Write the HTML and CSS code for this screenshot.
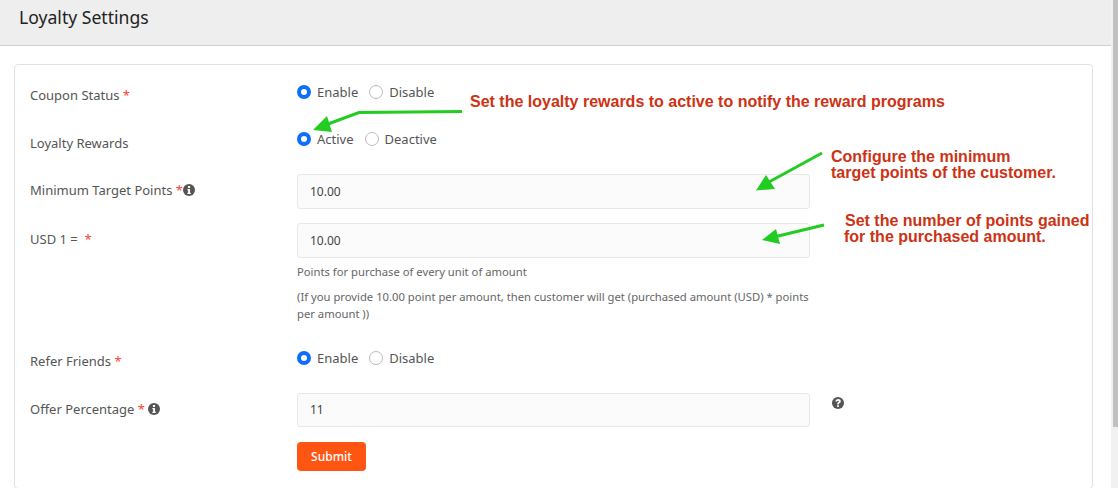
FILE: index.html
```html
<!DOCTYPE html>
<html lang="en">

<head>
  <meta charset="UTF-8">
  <meta name="viewport" content="width=device-width, initial-scale=1.0">
  <title>Loyalty Settings</title>
  <link rel="stylesheet" href="styles.css">
</head>

<body>
  <div class="page">
    <header class="page-header">
      <h1>Loyalty Settings</h1>
    </header>

    <form class="card">
      <div class="form-row">
        <label class="field-label">Coupon Status <span class="req">*</span></label>
        <div class="radio-group">
          <label class="radio"><input type="radio" name="coupon" checked> Enable</label>
          <label class="radio"><input type="radio" name="coupon"> Disable</label>
        </div>
      </div>

      <div class="form-row">
        <label class="field-label">Loyalty Rewards</label>
        <div class="radio-group">
          <label class="radio"><input type="radio" name="rewards" checked> Active</label>
          <label class="radio"><input type="radio" name="rewards"> Deactive</label>
        </div>
      </div>

      <div class="form-row">
        <label class="field-label">Minimum Target Points <span class="req">*</span><svg class="icon" viewBox="0 0 16 16"><circle cx="8" cy="8" r="8" /><path class="glyph" d="M6.6 2.8h2.8v2.4H6.6zM5.8 6.6h3.6v5h1v1.7H5.8v-1.7h1V8.3h-1z" /></svg></label>
        <div class="field">
          <input class="text-input" type="text" value="10.00">
        </div>
      </div>

      <div class="form-row">
        <label class="field-label">USD 1 = &nbsp;<span class="req">*</span></label>
        <div class="field">
          <input class="text-input" type="text" value="10.00">
          <p class="hint hint-first">Points for purchase of every unit of amount</p>
          <p class="hint">(If you provide 10.00 point per amount, then customer will get (purchased amount (USD) * points per amount ))</p>
        </div>
      </div>

      <div class="form-row">
        <label class="field-label">Refer Friends <span class="req">*</span></label>
        <div class="radio-group">
          <label class="radio"><input type="radio" name="refer" checked> Enable</label>
          <label class="radio"><input type="radio" name="refer"> Disable</label>
        </div>
      </div>

      <div class="form-row">
        <label class="field-label">Offer Percentage <span class="req">*</span> <svg class="icon" viewBox="0 0 16 16"><circle cx="8" cy="8" r="8" /><path class="glyph" d="M6.6 2.8h2.8v2.4H6.6zM5.8 6.6h3.6v5h1v1.7H5.8v-1.7h1V8.3h-1z" /></svg></label>
        <div class="field">
          <input class="text-input" type="text" value="11">
          <button class="submit-btn" type="button">Submit</button>
        </div>
        <svg class="icon help" viewBox="0 0 16 16"><circle cx="8" cy="8" r="6.9" /><path class="glyph" d="M5 6.2C5.2 4.4 6.5 3.4 8.2 3.4c1.700 0 3 1 3 2.600 0 1.300-.8 1.900-1.600 2.400-.5.300-.7.500-.7 1v.3H7V9.300c0-1.100.5-1.700 1.300-2.200.5-.3.900-.5.900-1 0-.4-.4-.8-1-.8-.7 0-1.100.4-1.200 1.100zM7 10.500h2v2H7z" /></svg>
      </div>
    </form>
  </div>

  <div class="scrollbar"><div class="scrollbar-thumb"></div></div>

  <!-- annotations drawn on top of the screenshot -->
  <svg class="arrows" viewBox="0 0 1118 488">
    <path class="arrow-line" d="M462 111.500L359 112.500L328 124" />
    <polygon class="arrow-head" points="313,130 327,116 332,132" />
    <path class="arrow-line" d="M822 153L769 182" />
    <polygon class="arrow-head" points="756,190.500 766,175 775,189" />
    <path class="arrow-line" d="M824 225L776 236.500" />
    <polygon class="arrow-head" points="762,240 776,229 780,244" />
  </svg>
  <div class="note note-rewards">Set the loyalty rewards to active to notify the reward programs</div>
  <div class="note note-target">Configure the minimum<br>target points of the customer.</div>
  <div class="note note-points">Set the number of points gained<br><span class="note-back">for the purchased amount.</span></div>
</body>

</html>
```

FILE: styles.css
```css
html,
body {
  height: 100%;
}

body {
  font-family: 'Noto Sans', 'Open Sans', sans-serif;
  font-size: 13px;
  color: #555;
  background: #fff;
  margin: 0;
  overflow: hidden;
  display: flex;
}

.page {
  flex: 1;
  min-width: 0;
}

.page-header {
  background-color: #eeeeee;
  border-bottom: 1px solid #cfcfcf;
  height: 45px;
  padding-left: 19px;
}

.page-header h1 {
  margin: 0;
  padding-top: 4px;
  font-size: 17.6px;
  line-height: 26px;
  font-weight: 400;
  color: #222;
}

.card {
  margin: 18px 18px 0 14px;
  padding: 14px 15px 0;
  border: 1px solid #e2e2e2;
  border-radius: 4px;
  height: 409px;
}

.form-row {
  display: grid;
  grid-template-columns: 267px 513px 1fr;
  margin-bottom: 14.500px;
}

.field-label {
  line-height: 33px;
  white-space: nowrap;
}

.req {
  color: #f44336;
}

.icon {
  width: 12px;
  height: 12px;
  vertical-align: -1px;
  fill: #555;
}

.glyph {
  fill: #fff;
}

.help {
  width: 14px;
  height: 14px;
  margin: 3px 0 0 21px;
}

.radio-group {
  display: flex;
  gap: 11px;
  height: 32.500px;
  padding-top: 2.500px;
  box-sizing: border-box;
}

.radio {
  display: flex;
  align-items: center;
  gap: 6px;
  height: 20px;
}

.radio input {
  appearance: none;
  width: 14px;
  height: 14px;
  margin: 0;
  border: 1px solid #bbb;
  border-radius: 50%;
  background: #fff;
}

.radio input:checked {
  border: 4px solid #0d6efd;
}

.text-input {
  display: block;
  width: 100%;
  height: 34.500px;
  box-sizing: border-box;
  padding: 0 12px;
  border: 1px solid #e8e8e8;
  border-radius: 3px;
  background: #fbfbfb;
  font: inherit;
  font-size: 12px;
  color: #444;
}

.hint {
  margin: 0 0 8.500px;
  font-size: 11.250px;
  line-height: 17px;
  color: #666;
}

.hint-first {
  margin-top: 5px;
}

.submit-btn {
  display: block;
  margin-top: 14.500px;
  width: 69px;
  height: 29px;
  border: none;
  border-radius: 4px;
  background-color: #ff5513;
  color: white;
  font: inherit;
  font-size: 12px;
  font-weight: 500;
}

.scrollbar {
  width: 7px;
  background: #f1f1f1;
  padding-left: 2px;
  box-sizing: border-box;
}

.scrollbar-thumb {
  height: 427px;
  background: #c1c1c1;
}

.arrows {
  position: absolute;
  top: 0;
  left: 0;
  width: 1118px;
  height: 488px;
}

.arrow-line {
  fill: none;
  stroke: #22cc22;
  stroke-width: 3;
}

.arrow-head {
  fill: #22cc22;
}

.note {
  position: absolute;
  font-family: 'Liberation Sans', Arial, sans-serif;
  font-size: 16px;
  font-weight: 700;
  line-height: 16px;
  color: #cc3314;
  white-space: nowrap;
}

.note-rewards {
  left: 470px;
  top: 94px;
}

.note-target {
  left: 831px;
  top: 149px;
}

.note-points {
  left: 845px;
  top: 213px;
}

.note-back {
  margin-left: -1px;
}
```
